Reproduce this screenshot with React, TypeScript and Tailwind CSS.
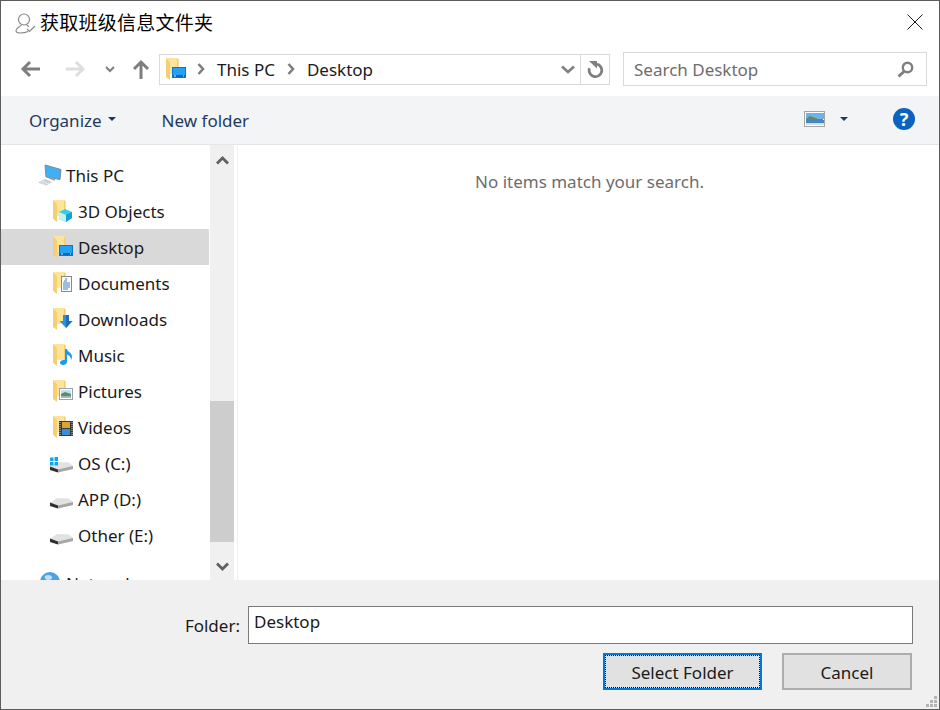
import React from "react";

const FONT = "font-['Noto_Sans','Open_Sans','Noto_Sans_CJK_SC',sans-serif]";

function Folder() {
  return (
    <>
      <path d="M4 1h10.500l1 1v15H4z" fill="#fde49a" />
      <path d="M14 2h1.500v15H14z" fill="#f3cd72" />
      <path d="M3 1l4 3v19l-4-3z" fill="#f6cf72" />
      <path d="M3 1h1.500l2.500 3v1z" fill="#fbe7a8" />
    </>
  );
}

function Row24({ children }: { children: React.ReactNode }) {
  return (
    <svg width="24" height="24" viewBox="0 0 24 24" className="shrink-0">
      {children}
    </svg>
  );
}

const Cube = () => (
  <Row24>
    <Folder />
    <path d="M15 10l7 3v6l-6 4-7-3v-7z" fill="#36d0e0" />
    <path d="M9 13l7 3v7l-7-3z" fill="#c5f1f2" />
    <path d="M16 16l6-3v6l-6 4z" fill="#12a3cf" />
  </Row24>
);
const Monitor = () => (
  <Row24>
    <Folder />
    <rect x="9.500" y="10.500" width="13" height="10" fill="#22a2f5" stroke="#0a78c8" />
    <rect x="10" y="18" width="12" height="2" fill="#0a69b5" />
    <rect x="11" y="18.500" width="2" height="1" fill="#d5edfc" />
    <rect x="20" y="18.500" width="1" height="1" fill="#d5edfc" />
  </Row24>
);
const Doc = () => (
  <Row24>
    <Folder />
    <rect x="11.500" y="5.500" width="10" height="15" fill="#fbfbfb" stroke="#8a8a8a" />
    <path d="M15 8h2M14 10h3M13 12h7M13 14h7M13 16h7M13 18h5" stroke="#3f7fc0" strokeWidth="1" />
  </Row24>
);
const Down = () => (
  <Row24>
    <Folder />
    <path d="M13 8h6v6h3.500l-6.500 7-6.500-7H13z" fill="#2f8fe0" />
    <path d="M16 8h3v6h3.500l-6.500 7z" fill="#1b6fc0" />
  </Row24>
);
const Note = () => (
  <Row24>
    <Folder />
    <path d="M15 6h2c0 3 5 3 5 8 0 1-.5 2-1 3 0-3-2-5-4-5.500V19c0 2-2 3-4 3s-3-1-3-2.500 2-3 5-2.500z" fill="#1a9bf0" />
  </Row24>
);
const Pic = () => (
  <Row24>
    <Folder />
    <rect x="9.500" y="9.500" width="13" height="11" fill="#fff" stroke="#a0a0a0" />
    <rect x="11" y="11" width="10" height="4" fill="#bfe0f5" />
    <path d="M11 15l4-2 6 2v2H11z" fill="#5f8a6a" />
    <rect x="11" y="17" width="10" height="2" fill="#9fb7bf" />
  </Row24>
);
const Film = () => (
  <Row24>
    <Folder />
    <rect x="9" y="6" width="14" height="15" fill="#3a3a3a" />
    <path d="M10 7v13M22 7v13" stroke="#cfcfcf" strokeWidth="1" strokeDasharray="1 1" />
    <rect x="12" y="7" width="8" height="6" fill="#d9a53a" />
    <rect x="12" y="14" width="8" height="6" fill="#3b8fd9" />
  </Row24>
);
const Drive = ({ win }: { win?: boolean }) => (
  <Row24>
    <path d="M0 16l7-5 12 .500 4 3.500v3l-15 3-8-2z" fill="#e2e2e2" />
    <path d="M0 15.500l8 3v3l-8-2.500z" fill="#2f2f2f" />
    <path d="M8 18.500l15-3.500v3l-15 3.500z" fill="#a6a6a6" />
    {win && (
      <g fill="#12a5ee">
        <rect x="0" y="6.500" width="3.500" height="3.500" />
        <rect x="4.500" y="6" width="3.500" height="4" />
        <rect x="0" y="11" width="3.500" height="3.500" />
        <rect x="4.500" y="11" width="3.500" height="3.500" />
      </g>
    )}
  </Row24>
);
const PC = () => (
  <Row24>
    <path d="M7 2l16 4.500-1 10L8 14z" fill="#3fb0f5" stroke="#7f8b95" />
    <path d="M0 19.500l7-3.500 7 3-6 3.500z" fill="#c4c9cd" />
    <path d="M2 19.500l5-2M4 20.500l5-2M6 21.500l5-2" stroke="#f0f0f0" strokeWidth=".8" />
    <path d="M11 15l6 2" stroke="#9aa2a8" strokeWidth="1.500" />
  </Row24>
);
const Globe = () => (
  <Row24>
    <circle cx="12" cy="11" r="10" fill="#4da3dd" />
    <path d="M7 5c3-2 6-1 7 1s-2 3-4 3-4-2-3-4z" fill="#bfe0f5" />
    <path d="M0 11l5 2v2l-5-2z" fill="#9aa5ad" />
  </Row24>
);

const tree: [React.ReactNode, string][] = [
  [<Cube />, "3D Objects"],
  [<Monitor />, "Desktop"],
  [<Doc />, "Documents"],
  [<Down />, "Downloads"],
  [<Note />, "Music"],
  [<Pic />, "Pictures"],
  [<Film />, "Videos"],
  [<Drive win />, "OS (C:)"],
  [<Drive />, "APP (D:)"],
  [<Drive />, "Other (E:)"],
];

const Crumb = () => (
  <svg width="8" height="12" viewBox="0 0 8 12" className="shrink-0">
    <path d="M1.500 1l4.500 5-4.500 5" fill="none" stroke="#7f7f7f" strokeWidth="2.600" />
  </svg>
);

const Caret = () => (
  <svg width="8" height="4" viewBox="0 0 8 4" className="shrink-0">
    <path d="M0 0h8L4 4z" fill="#1f3a5f" />
  </svg>
);

export default function App() {
  return (
    <div className={`${FONT} relative w-[940px] h-[710px] border border-[#5c5c5c] bg-white flex flex-col overflow-hidden text-[17px] leading-6 text-[#1a1a1a]`}>
      {/* Title bar */}
      <div className="h-[41px] shrink-0 flex items-center pl-[13px] pr-[16px]">
        <svg width="22" height="24" viewBox="0 0 22 24" className="shrink-0">
          <circle cx="10" cy="9.500" r="5.500" fill="none" stroke="#8a8a8a" strokeWidth="1.200" />
          <path d="M7.500 14.500c0 2-5.500 3-5.500 6 0 2 2 2.500 4 2.500s6-.5 8-1.500M12.500 14.500c.5 1 1.500 1.500 2.500 2" fill="none" stroke="#8a8a8a" strokeWidth="1.200" />
          <path d="M13 19l2.500 2.500L21 16" fill="none" stroke="#8a8a8a" strokeWidth="1.200" />
        </svg>
        <span className="ml-[4px] text-[19px] tracking-[0.25px] font-['Noto_Sans_CJK_SC','Noto_Sans',sans-serif] text-black">获取班级信息文件夹</span>
        <svg width="16" height="16" viewBox="0 0 16 16" className="ml-auto shrink-0">
          <path d="M.5.500l15 15M15.500.500l-15 15" stroke="#1a1a1a" strokeWidth="1" />
        </svg>
      </div>

      {/* Navigation row */}
      <div className="h-[54px] shrink-0 flex items-center pl-[19px]">
        <svg width="20" height="18" viewBox="0 0 20 18" className="shrink-0">
          <path d="M20 9H3M10 2L3 9l7 7" fill="none" stroke="#7f7f7f" strokeWidth="3" />
        </svg>
        <svg width="20" height="18" viewBox="0 0 20 18" className="ml-[26px] shrink-0">
          <path d="M0 9h17M10 2l7 7-7 7" fill="none" stroke="#dedede" strokeWidth="3" />
        </svg>
        <svg width="10" height="7" viewBox="0 0 10 7" className="ml-[19px] shrink-0">
          <path d="M1 1l4 4 4-4" fill="none" stroke="#7f7f7f" strokeWidth="2" />
        </svg>
        <svg width="18" height="20" viewBox="0 0 18 20" className="ml-[17px] shrink-0">
          <path d="M9 20V3M2 10l7-7 7 7" fill="none" stroke="#7f7f7f" strokeWidth="3" />
        </svg>
        <div className="ml-[9px] w-[451px] h-[31px] border border-[#d9d9d9] flex items-center pl-[3px] shrink-0">
          <Monitor />
          <span className="ml-[10px] flex"><Crumb /></span>
          <span className="ml-[12px] pt-[2px]">This PC</span>
          <span className="ml-[12px] flex"><Crumb /></span>
          <span className="ml-[12px] pt-[2px]">Desktop</span>
          <svg width="14" height="9" viewBox="0 0 14 9" className="ml-auto mr-[5px] shrink-0">
            <path d="M1 1.500l6 5.500 6-5.500" fill="none" stroke="#7f7f7f" strokeWidth="2.600" />
          </svg>
          <div className="w-[29px] h-full border-l border-[#d9d9d9] flex items-center justify-center shrink-0">
            <svg width="17" height="18" viewBox="0 0 17 18">
              <path d="M10 4.200a6.300 6.300 0 1 1-7.500 4" fill="none" stroke="#7f7f7f" strokeWidth="2.800" />
              <path d="M2 1h8v7.500z" fill="#7f7f7f" />
            </svg>
          </div>
        </div>
        <div className="ml-[13px] w-[304px] h-[34px] border border-[#d9d9d9] flex items-center pl-[10px] pr-[12px] shrink-0">
          <span className="text-[#6d6d6d] pt-[2px]">Search Desktop</span>
          <svg width="17" height="17" viewBox="0 0 17 17" className="ml-auto shrink-0">
            <circle cx="10.500" cy="6.500" r="4.700" fill="none" stroke="#7f7f7f" strokeWidth="2.400" />
            <path d="M7 10.500L1.500 15.500" stroke="#7f7f7f" strokeWidth="3" />
          </svg>
        </div>
      </div>

      {/* Toolbar */}
      <div className="h-[49px] shrink-0 bg-[#f3f4f6] border-b border-[#e5e5e5] flex items-center pl-[28px] text-[#1f3a5f]">
        <span className="pt-[2px]">Organize</span>
        <span className="ml-[6px] -mt-[3px] flex"><Caret /></span>
        <span className="ml-[46px] pt-[2px]">New folder</span>
        <svg width="21" height="16" viewBox="0 0 21 16" className="ml-auto -mt-[3px] shrink-0">
          <rect x=".5" y=".5" width="20" height="15" fill="#fff" stroke="#a6a6a6" />
          <rect x="2" y="2" width="18" height="6" fill="#6db3e8" />
          <path d="M2 8l4-3 8 3h5v1H2z" fill="#5d8a6c" />
          <rect x="2" y="9" width="18" height="3" fill="#4a86b8" />
          <rect x="2" y="12" width="18" height="2" fill="#d5e0e5" />
        </svg>
        <span className="ml-[15px] -mt-[3px] flex"><Caret /></span>
        <div className="ml-[45px] mr-[24px] -mt-[3px] w-[22px] h-[22px] rounded-full bg-[#0a64bd] flex items-center justify-center text-white text-[18px] font-bold leading-none shrink-0">?</div>
      </div>

      {/* Main */}
      <div className="h-[435px] shrink-0 flex">
        <div className="w-[208px] shrink-0 overflow-hidden pt-[12px]">
          <div className="h-[36px] flex items-center pl-[37px]">
            <PC />
            <span className="ml-[4px] pt-[2px]">This PC</span>
          </div>
          {tree.map(([icon, label]) => (
            <div key={label} className={`h-[36px] flex items-center pl-[49px] ${label === "Desktop" ? "bg-[#d9d9d9]" : ""}`}>
              {icon}
              <span className="ml-[4px] pt-[2px]">{label}</span>
            </div>
          ))}
          <div className="mt-[12px] h-[36px] flex items-center pl-[37px]">
            <Globe />
            <span className="ml-[4px] pt-[2px]">Network</span>
          </div>
        </div>
        <div className="ml-[1px] w-[24px] shrink-0 bg-[#f0f0f0] flex flex-col">
          <div className="h-[30px] flex items-center justify-center">
            <svg width="13" height="9" viewBox="0 0 13 9">
              <path d="M1 7.500l5.500-5.500 5.500 5.500" fill="none" stroke="#606060" strokeWidth="2.800" />
            </svg>
          </div>
          <div className="h-[226px]" />
          <div className="h-[141px] bg-[#cdcdcd]" />
          <div className="flex-1 pt-[10px] flex items-center justify-center">
            <svg width="13" height="9" viewBox="0 0 13 9">
              <path d="M1 1.500l5.500 5.500 5.500-5.500" fill="none" stroke="#606060" strokeWidth="2.800" />
            </svg>
          </div>
        </div>
        <div className="ml-[3px] flex-1 border-l border-[#efefef] pt-[25px] pl-[2px] flex justify-center">
          <span className="text-[#6d6d6d]">No items match your search.</span>
        </div>
      </div>

      {/* Footer */}
      <div className="flex-1 bg-[#f0f0f0] pt-[26px] pr-[26px]">
        <div className="flex items-center justify-end">
          <span className="mr-[8px] pt-[2px]">Folder:</span>
          <div className="w-[665px] h-[38px] bg-white border border-[#7a7a7a] pl-[5px] pt-[3px]">Desktop</div>
        </div>
        <div className="mt-[9px] pr-[1px] flex justify-end gap-[20px]">
          <button className="w-[159px] h-[37px] bg-[#e1e1e1] border-2 border-[#0078d7] flex">
            <span className="flex-1 border border-dotted border-black flex items-center justify-center pt-[2px]">Select Folder</span>
          </button>
          <button className="w-[130px] h-[37px] bg-[#e1e1e1] border-2 border-[#adadad] flex items-center justify-center pt-[2px]">Cancel</button>
        </div>
      </div>

      {/* Resize grip */}
      <svg width="12" height="12" viewBox="0 0 12 12" className="absolute right-[1px] bottom-[1px]">
        <g fill="#b5b5b5">
          <rect x="8" y="0" width="3" height="3" />
          <rect x="4" y="4" width="3" height="3" />
          <rect x="8" y="4" width="3" height="3" />
          <rect x="0" y="8" width="3" height="3" />
          <rect x="4" y="8" width="3" height="3" />
          <rect x="8" y="8" width="3" height="3" />
        </g>
      </svg>
    </div>
  );
}
